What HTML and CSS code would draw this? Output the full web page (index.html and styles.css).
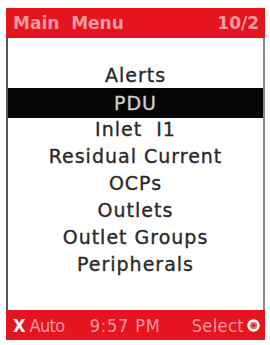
FILE: index.html
```html
<!DOCTYPE html>
<html>
<head>
<meta charset="utf-8">
<link rel="stylesheet" href="styles.css">
</head>
<body>
<div class="screen">
  <div class="header">
    <span class="title">Main&nbsp; Menu</span>
    <span class="page">10/2</span>
  </div>
  <div class="content">
    <ul class="menu">
      <li class="item">Alerts</li>
      <li class="item selected">PDU</li>
      <li class="item">Inlet&nbsp; I1</li>
      <li class="item">Residual Current</li>
      <li class="item">OCPs</li>
      <li class="item">Outlets</li>
      <li class="item">Outlet Groups</li>
      <li class="item">Peripherals</li>
    </ul>
  </div>
  <div class="footer">
    <span class="f-left"><b class="x">X</b> Auto</span>
    <span class="f-mid">9:57 PM</span>
    <span class="f-right">Select
      <svg class="sel-icon" width="13" height="13" viewBox="0 0 13 13"><circle cx="6.5" cy="6.5" r="5" fill="#e86a74" stroke="#ffffff" stroke-width="2.4"/><circle cx="6.5" cy="6.5" r="1.8" fill="#b8303c"/></svg>
    </span>
  </div>
</div>
</body>
</html>
```

FILE: styles.css
```css
html, body {
  margin: 0;
  padding: 0;
  background: #ffffff;
}
body {
  width: 270px;
  height: 345px;
  overflow: hidden;
}
.screen {
  margin: 8px 0 0 6px;
  width: 259px;
  display: flex;
  flex-direction: column;
}
.header {
  height: 30px;
  background: #e6141e;
  display: flex;
  align-items: center;
  justify-content: space-between;
  padding: 0 6px 0 7px;
  color: #f59aa0;
  font-family: "DejaVu Sans", sans-serif;
  font-weight: bold;
  font-size: 17px;
}
.content {
  height: 272px;
  border-left: 2px solid #555555;
  border-right: 2px solid #8a8a8a;
  box-sizing: border-box;
}
.menu {
  list-style: none;
  margin: 0;
  padding: 24px 0 0 0;
}
.item {
  height: 27px;
  line-height: 27px;
  text-align: center;
  font-family: "DejaVu Sans", sans-serif;
  font-size: 19px;
  letter-spacing: 1px;
  color: #2a2a2a;
  -webkit-text-stroke: 0.35px #2a2a2a;
}
.item.selected {
  background: #050505;
  color: #cfcfcf;
  -webkit-text-stroke: 0.35px #cfcfcf;
  height: 30px;
  line-height: 30px;
  margin: -1px 0 -2px 0;
}
.footer {
  height: 30px;
  background: #e6141e;
  display: flex;
  align-items: center;
  padding: 0 5px 0 7px;
  color: #f59aa0;
  font-family: "DejaVu Sans Condensed", "DejaVu Sans", sans-serif;
  font-stretch: condensed;
  font-size: 18px;
}
.f-left {
  letter-spacing: -0.6px;
}
.x {
  color: #ffffff;
  font-weight: bold;
}
.f-mid {
  letter-spacing: 0.8px;
  margin-left: 25px;
}
.f-right {
  margin-left: auto;
  display: flex;
  align-items: center;
  gap: 3px;
  letter-spacing: 0.4px;
}
.sel-icon {
  display: block;
}
```
